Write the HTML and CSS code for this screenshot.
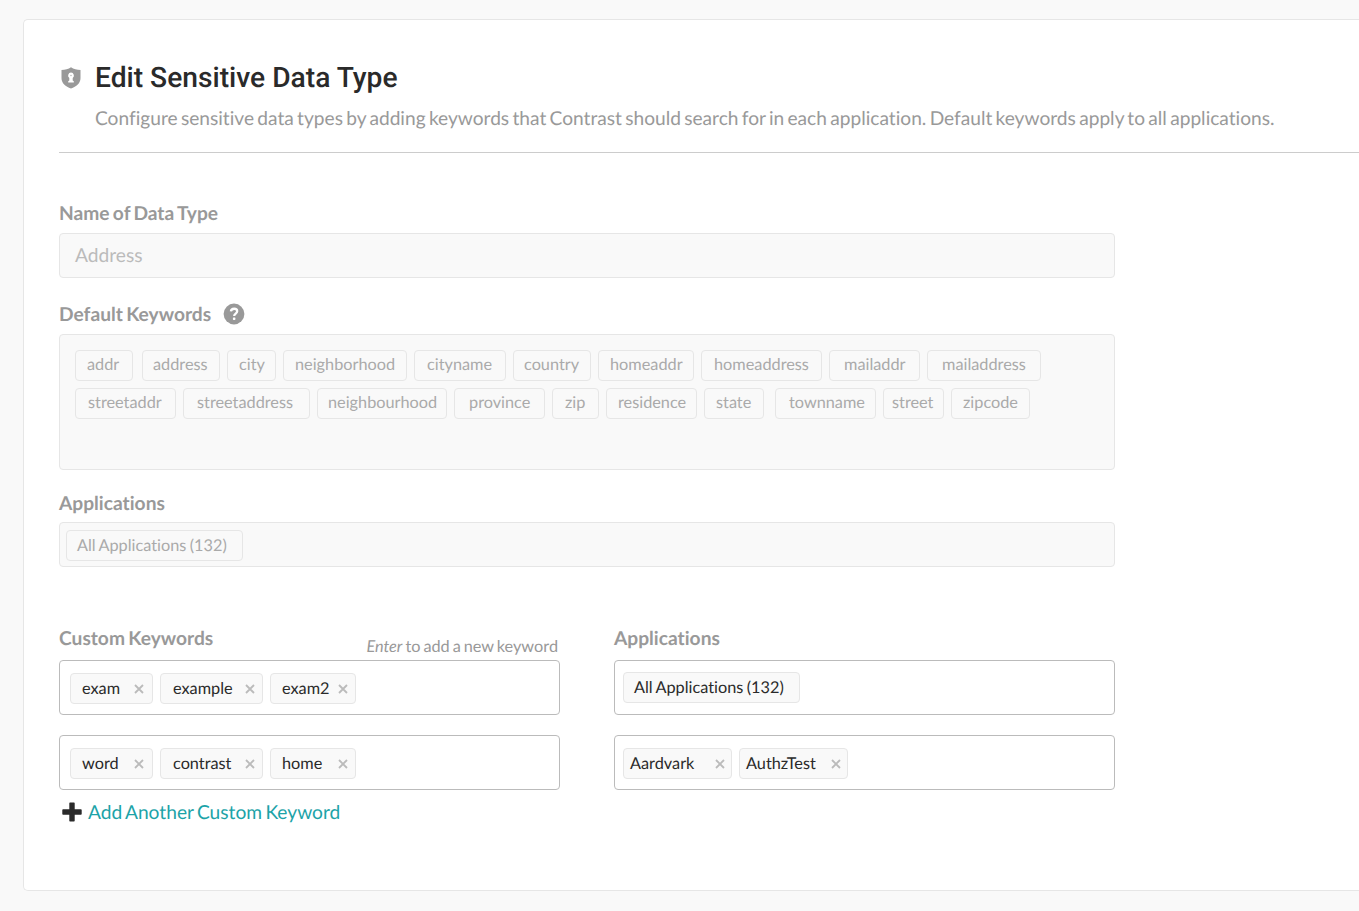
FILE: index.html
```html
<!DOCTYPE html>
<html lang="en">
<head>
<meta charset="utf-8">
<title>Edit Sensitive Data Type</title>
<link rel="stylesheet" href="styles.css">
</head>
<body>
<main class="panel">
  <header class="head">
    <svg class="shield" viewBox="0 0 20 22" width="20" height="22"><path fill="#999" d="M10 0.3C7.5 2 4 2.9 0.5 2.9V11C0.5 16.3 4.6 19.7 10 21.5C15.400 19.700 19.500 16.300 19.500 11V2.900C16 2.900 12.500 2 10 0.300Z"/><path fill="#fff" d="M10 5.600A3 3 0 0 0 8.300 11L8.300 13.400L7.200 14.200V15.600H12.800V14.200L11.700 13.400V11A3 3 0 0 0 10 5.600Z"/><circle cx="10" cy="8.500" r=".8" fill="#bbb"/></svg>
    <div class="heading">
      <h1 class="title">Edit Sensitive Data Type</h1>
      <p class="intro">Configure sensitive data types by adding keywords that Contrast should search for in each application. Default keywords apply to all applications.</p>
    </div>
  </header>
  <form class="form">
    <section class="group">
      <label class="label">Name of Data Type</label>
      <div class="field name">Address</div>
    </section>
    <section class="group keywords-group">
      <label class="label">Default Keywords <svg class="help" width="22" height="22" viewBox="0 0 22 22"><circle cx="11" cy="11" r="10.400" fill="#999"/><path d="M7.900 8.300C8.300 4.900 14.200 4.900 14.200 8.300C14.200 10.500 11.200 10.600 11.200 12.900" fill="none" stroke="#fff" stroke-width="2.300"/><rect x="9.900" y="14.400" width="2.500" height="2.500" rx=".6" fill="#fff"/></svg></label>
      <div class="field keywords">
        <div class="row first">
          <span class="tag">addr</span><span class="tag">address</span><span class="tag">city</span><span class="tag">neighborhood</span><span class="tag">cityname</span><span class="tag">country</span><span class="tag">homeaddr</span><span class="tag">homeaddress</span><span class="tag">mailaddr</span><span class="tag">mailaddress</span>
        </div>
        <div class="row second">
          <span class="tag">streetaddr</span><span class="tag">streetaddress</span><span class="tag">neighbourhood</span><span class="tag">province</span><span class="tag">zip</span><span class="tag">residence</span><span class="tag">state</span><span class="tag">townname</span><span class="tag">street</span><span class="tag">zipcode</span>
        </div>
      </div>
    </section>
    <section class="group apps-group">
      <label class="label">Applications</label>
      <div class="field apps"><span class="tag all">All Applications (132)</span></div>
    </section>
    <section class="custom">
      <div class="column">
        <div class="caption"><label class="label">Custom Keywords</label><span class="hint"><em>Enter</em> to add a new keyword</span></div>
        <div class="box">
          <span class="tag c1">exam<svg class="x" viewBox="0 0 10 10"><path d="M1 1L9 9M9 1L1 9"/></svg></span>
          <span class="tag c2">example<svg class="x" viewBox="0 0 10 10"><path d="M1 1L9 9M9 1L1 9"/></svg></span>
          <span class="tag c3">exam2<svg class="x" viewBox="0 0 10 10"><path d="M1 1L9 9M9 1L1 9"/></svg></span>
        </div>
        <div class="box">
          <span class="tag c1">word<svg class="x" viewBox="0 0 10 10"><path d="M1 1L9 9M9 1L1 9"/></svg></span>
          <span class="tag c2">contrast<svg class="x" viewBox="0 0 10 10"><path d="M1 1L9 9M9 1L1 9"/></svg></span>
          <span class="tag c3">home<svg class="x" viewBox="0 0 10 10"><path d="M1 1L9 9M9 1L1 9"/></svg></span>
        </div>
      </div>
      <div class="column right">
        <div class="caption"><label class="label">Applications</label></div>
        <div class="box raised"><span class="tag all">All Applications (132)</span></div>
        <div class="box">
          <span class="tag app">Aardvark<svg class="x" viewBox="0 0 10 10"><path d="M1 1L9 9M9 1L1 9"/></svg></span>
          <span class="tag app">AuthzTest<svg class="x" viewBox="0 0 10 10"><path d="M1 1L9 9M9 1L1 9"/></svg></span>
        </div>
      </div>
    </section>
    <a class="add"><svg width="20" height="20" viewBox="0 0 20 20"><path fill="#2a2a2a" d="M8 0.500H12Q12.700 .5 12.700 1.200V7.300H18.900Q19.700 7.300 19.700 8V12Q19.700 12.700 18.900 12.700H12.700V18.800Q12.700 19.500 12 19.500H8Q7.300 19.500 7.300 18.800V12.700H1.100Q.3 12.700 .3 12V8Q.3 7.300 1.100 7.300H7.300V1.200Q7.300 .5 8 .5Z"/></svg><span class="add-text">Add Another Custom Keyword</span></a>
  </form>
</main>
</body>
</html>
```
FILE: styles.css
```css
* { box-sizing: border-box; }
body { margin: 0; height: 911px; padding: 19px 0 0 23px; overflow: hidden; background: #f9f9f9; color: #999; font: 19.2px/24px Lato, sans-serif; font-variant-ligatures: none; text-rendering: geometricPrecision; word-spacing: -1.4px; }
.panel { height: 872px; padding: 0 0 0 35px; background: #fff; border: 1px solid #e6e6e6; border-right: 0; border-radius: 5px 0 0 5px; }
.head { display: flex; height: 133px; padding-left: 2px; border-bottom: 1px solid #ccc; }
.shield { flex: none; margin-top: 47px; }
.heading { margin-left: 14px; padding-top: 40px; white-space: nowrap; }
.title { margin: 0; color: #2a2a2a; font: 500 28.2px/36px Roboto, sans-serif; word-spacing: 0; }
.intro { margin: 11px 0 0; font-size: 19.15px; word-spacing: -1.6px; }
.form { width: 1056px; padding-top: 48px; }
.label { display: flex; align-items: center; height: 24px; padding-top: 2px; font-weight: 700; }
.help { margin: -2px 0 0 12px; }
.field { display: flex; margin-top: 8px; background: #f9f9f9; border: 1px solid #e6e6e6; border-radius: 4px; }
.name { height: 45px; align-items: center; padding: 0 0 0 15px; color: #bbb; }
.keywords-group { margin-top: 24px; }
.keywords { height: 136px; flex-direction: column; gap: 7px; padding: 15px; }
.row { display: flex; gap: 7px; }
.tag { display: flex; flex: none; align-items: center; height: 31px; padding: 1px 0 0 11px; border: 1px solid #e6e6e6; border-radius: 4px; background: #f9f9f9; color: #aaa; font-size: 16.3px; line-height: 20px; word-spacing: -0.8px; white-space: nowrap; }
.row .tag { padding: 0 0 1px 11px; }
.first .tag:nth-child(1) { width: 58px; margin-right: 2px; }
.first .tag:nth-child(2) { width: 78px; padding-left: 10px; }
.first .tag:nth-child(3) { width: 49px; }
.first .tag:nth-child(4) { width: 124px; }
.first .tag:nth-child(5) { width: 92px; padding-left: 12px; }
.first .tag:nth-child(6) { width: 78px; padding-left: 10px; }
.first .tag:nth-child(7) { width: 96px; }
.first .tag:nth-child(8) { width: 121px; padding-left: 12px; }
.first .tag:nth-child(9) { width: 91px; padding-left: 14px; }
.first .tag:nth-child(10) { width: 114px; padding-left: 14px; }
.second .tag:nth-child(1) { width: 101px; padding-left: 12px; }
.second .tag:nth-child(2) { width: 127px; padding-left: 13px; }
.second .tag:nth-child(3) { width: 130px; padding-left: 10px; }
.second .tag:nth-child(4) { width: 91px; padding-left: 14px; }
.second .tag:nth-child(5) { width: 47px; padding-left: 12px; }
.second .tag:nth-child(6) { width: 91px; }
.second .tag:nth-child(7) { width: 60px; margin-right: 4px; }
.second .tag:nth-child(8) { width: 101px; padding-left: 13px; }
.second .tag:nth-child(9) { width: 61px; padding-left: 8px; }
.second .tag:nth-child(10) { width: 79px; }
.apps-group { margin-top: 21px; }
.apps { height: 45px; margin-top: 7px; align-items: center; padding: 1px 0 0 6px; }
.tag.all { width: 177px; padding: 2px 0 0 10px; }
.custom { display: flex; gap: 54px; margin-top: 59px; }
.column { width: 501px; }
.caption { display: flex; justify-content: space-between; height: 34px; }
.hint { padding: 11px 2px 0 0; font-size: 16.3px; line-height: 20px; word-spacing: -1.2px; }
.box { display: flex; align-items: center; gap: 7px; height: 55px; margin-bottom: 20px; padding: 1px 0 0 10px; border: 1px solid #bbb; border-radius: 4px; }
.box:last-child { margin-bottom: 0; }
.right .box { padding-left: 8px; }
.right .raised { padding: 0 0 1px 8px; }
.box .tag { color: #2a2a2a; }
.c1 { width: 83px; }
.tag.c2 { width: 103px; padding-left: 12px; }
.c3 { width: 86px; }
.tag.app { width: 109px; padding-left: 6px; }
.x { width: 10px; height: 10px; margin: 0 8px 0 auto; fill: none; stroke: #bbb; stroke-width: 1.8; }
.c2 .x, .c3 .x { margin-right: 7px; }
.app .x { margin-right: 6px; }
.add { display: flex; align-items: center; gap: 6px; margin: 9px 0 0 3px; color: #1ca3a8; }
.add-text { padding-top: 2px; word-spacing: -1.6px; }
```
